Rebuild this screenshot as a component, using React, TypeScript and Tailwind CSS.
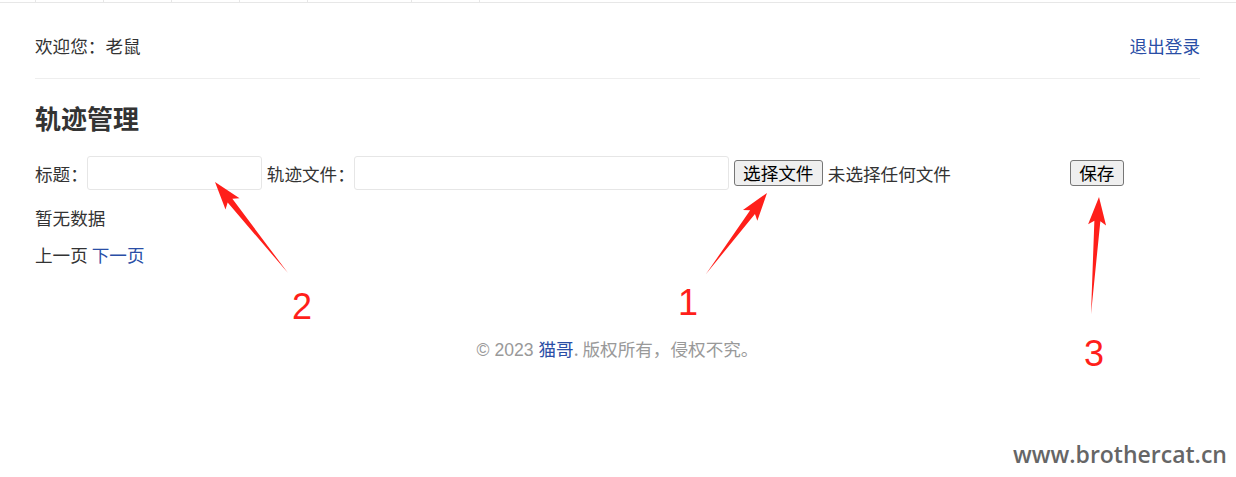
import React from 'react';

const cjk = { fontFamily: '"Microsoft YaHei", "Noto Sans CJK SC", "Liberation Sans", sans-serif' };

// annotation arrow: thin tail that widens into a pointed head
function arrowPoints(tx: number, ty: number, hx: number, hy: number) {
  const dx = hx - tx;
  const dy = hy - ty;
  const len = Math.sqrt(dx * dx + dy * dy);
  const ux = dx / len;
  const uy = dy / len;
  const nx = -uy;
  const ny = ux;
  const headLen = 24;
  const bx = hx - ux * headLen;
  const by = hy - uy * headLen;
  const wx = hx - ux * (headLen + 4);
  const wy = hy - uy * (headLen + 4);
  const pts = [
    [tx, ty],
    [bx + nx * 3, by + ny * 3],
    [wx + nx * 9, wy + ny * 9],
    [hx, hy],
    [wx - nx * 9, wy - ny * 9],
    [bx - nx * 3, by - ny * 3],
  ];
  return pts.map((p) => p.join(',')).join(' ');
}

const arrows = [
  { t: [288, 273], h: [215, 182] },
  { t: [706, 274], h: [767, 193] },
  { t: [1091, 314], h: [1099, 197] },
];

const ticks = [36, 68, 68, 68, 68, 104, 68];

export default function App() {
  return (
    <div className="relative w-[1236px] h-[477px] bg-white overflow-hidden text-[#333]" style={cjk}>
      {/* bottom of the nav bar that is cut off */}
      <div className="flex h-[3px] border-b border-[#e7e7e7]">
        {ticks.map((w, i) => (
          <div key={i} className="h-[2px] border-r border-[#e7e7e7] shrink-0" style={{ width: w }} />
        ))}
      </div>

      <div className="pl-[35px] pr-[36px]">
        <div className="flex justify-between items-center pt-[30px] pb-[20px] border-b border-[#eee] text-[17.6px] leading-[25px]">
          <span>欢迎您：老鼠</span>
          <a className="text-[#2a4ea6]">退出登录</a>
        </div>

        <h2 className="mt-[24px] text-[26px] leading-[29px] font-bold text-[#333]">轨迹管理</h2>

        <div className="mt-[24px] flex items-center text-[17.6px] leading-[25px]">
          <span>标题：</span>
          <div className="w-[175px] h-[34px] border border-[#e6e6e6] rounded-[3px] -ml-[1px]" />
          <span className="ml-[5px]">轨迹文件：</span>
          <div className="w-[375px] h-[34px] border border-[#e6e6e6] rounded-[3px] -ml-[1px]" />
          <div className="ml-[5px] w-[331px] flex items-center">
            <button className="h-[26px] w-[89px] bg-[#efefef] border border-[#767676] rounded-[3px] text-black text-[17.6px] leading-[22px]">
              选择文件
            </button>
            <span className="ml-[5px] text-[#333]">未选择任何文件</span>
          </div>
          <button className="ml-[5px] h-[26px] w-[54px] bg-[#efefef] border border-[#767676] rounded-[3px] text-black text-[17.6px] leading-[22px]">
            保存
          </button>
        </div>

        <div className="mt-[15px] text-[17.6px] leading-[25px]">暂无数据</div>
        <div className="mt-[12px] text-[17.6px] leading-[25px]">
          上一页 <a className="text-[#2a4ea6]">下一页</a>
        </div>

        <div className="mt-[69px] text-center text-[17.6px] leading-[25px] text-[#999]">
          <span style={{ fontFamily: '"Liberation Sans", Arial, sans-serif' }}>© 2023 </span>
          <a className="text-[#2a4ea6]">猫哥</a>
          <span>. 版权所有，侵权不究。</span>
        </div>
      </div>

      {/* red annotations over the page */}
      <svg className="absolute left-0 top-0 pointer-events-none" width="1236" height="477">
        {arrows.map((a, i) => (
          <polygon key={i} points={arrowPoints(a.t[0], a.t[1], a.h[0], a.h[1])} fill="#ff1f1a" />
        ))}
      </svg>
      <span className="absolute left-[292px] top-[287px] text-[36px] leading-[40px] text-[#ff1f1a]" style={{ fontFamily: '"Liberation Sans", Arial, sans-serif' }}>2</span>
      <span className="absolute left-[678px] top-[283px] text-[36px] leading-[40px] text-[#ff1f1a]" style={{ fontFamily: '"Liberation Sans", Arial, sans-serif' }}>1</span>
      <span className="absolute left-[1084px] top-[334px] text-[36px] leading-[40px] text-[#ff1f1a]" style={{ fontFamily: '"Liberation Sans", Arial, sans-serif' }}>3</span>

      <span className="absolute left-[1013px] top-[439px] text-[23px] leading-[30px] font-semibold text-[#666]" style={{ fontFamily: '"Open Sans", "Noto Sans", sans-serif' }}>
        www.brothercat.cn
      </span>
    </div>
  );
}
